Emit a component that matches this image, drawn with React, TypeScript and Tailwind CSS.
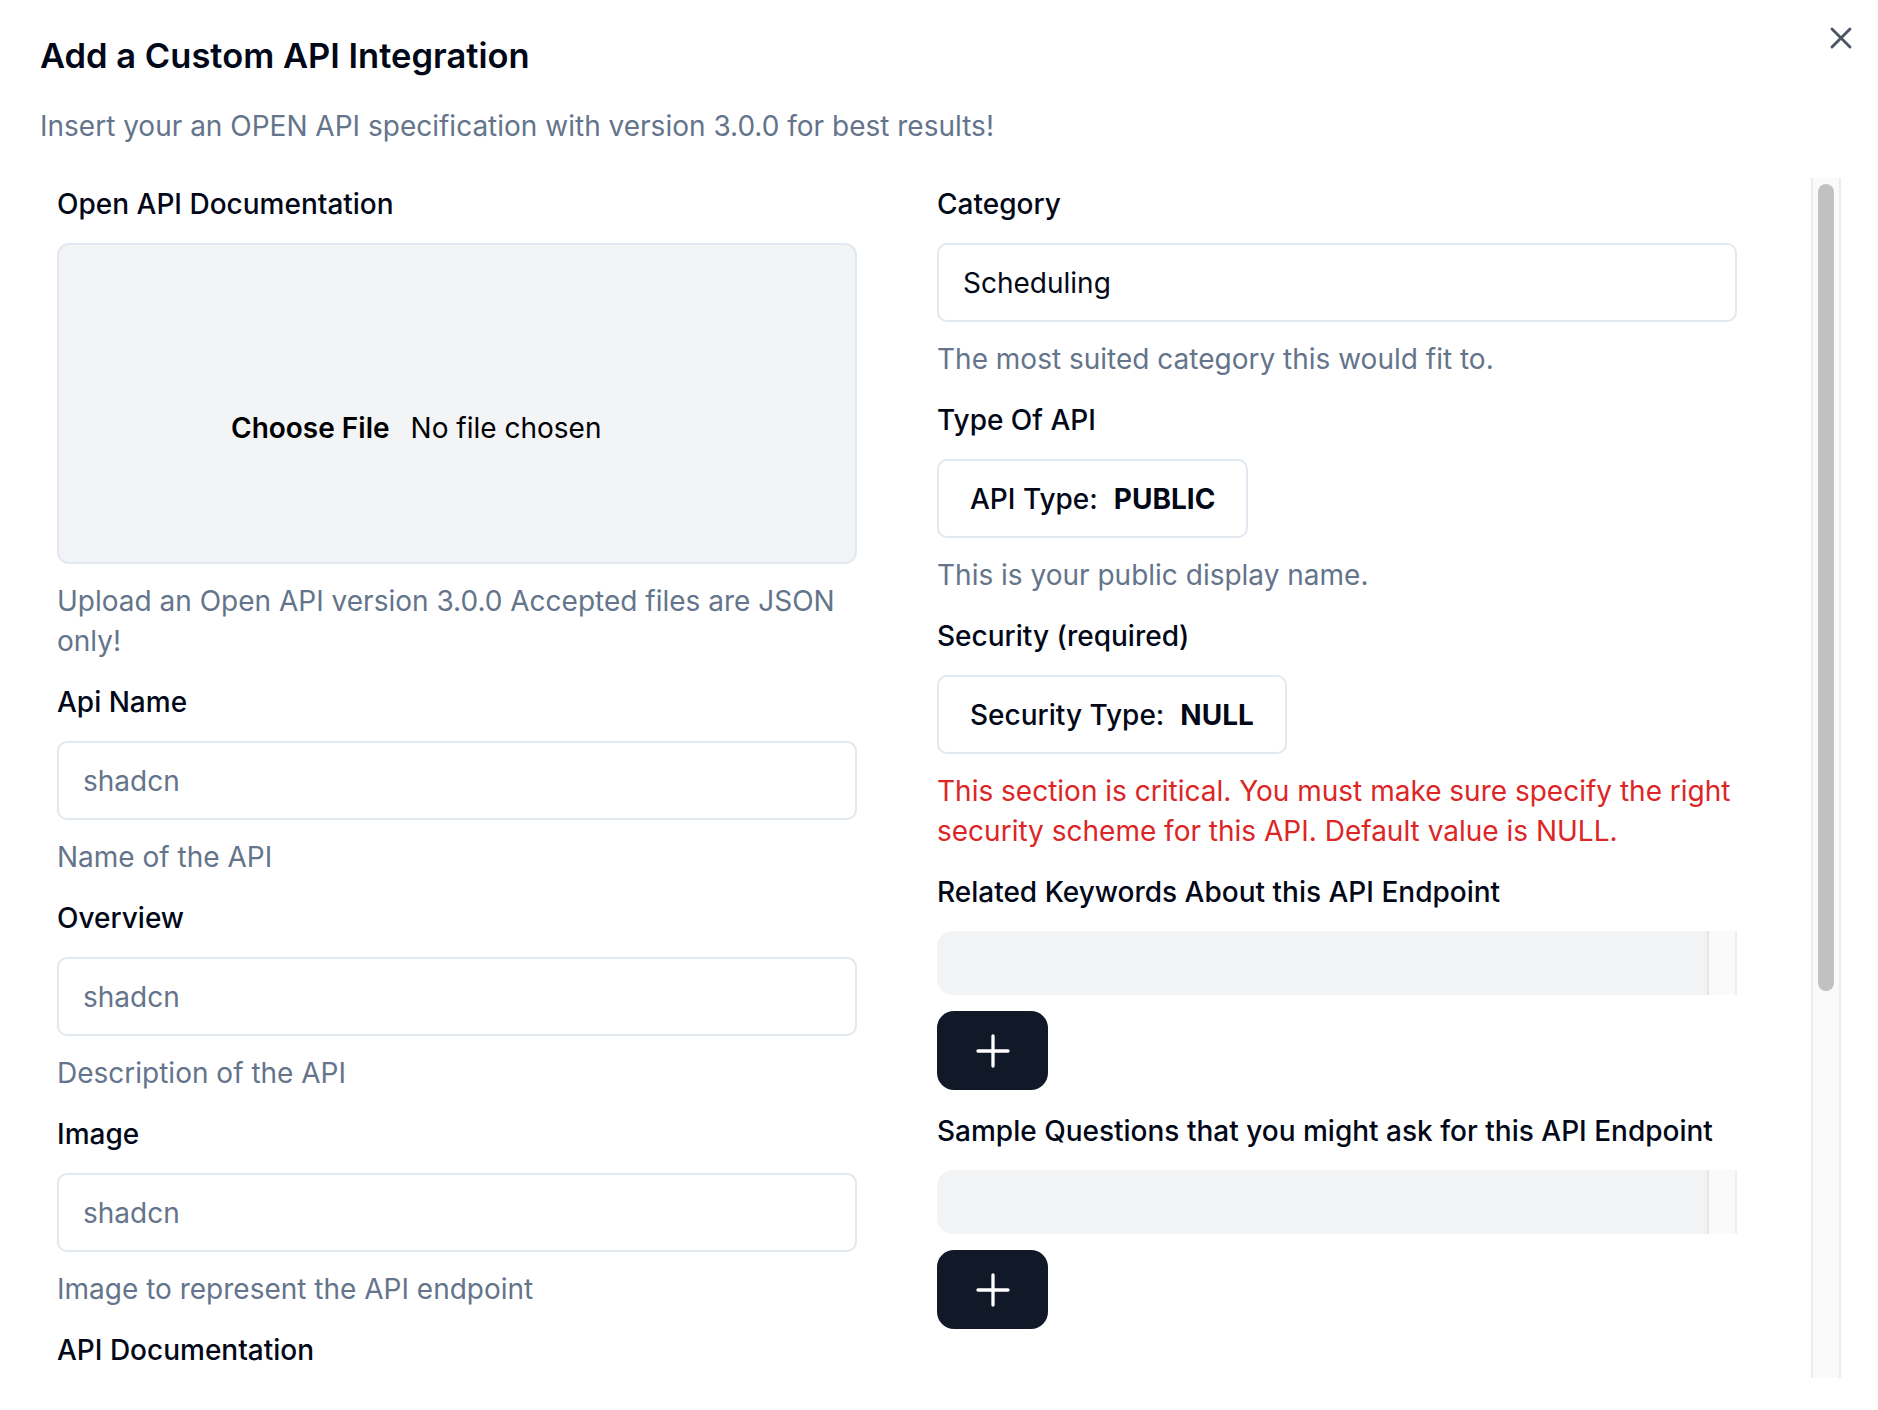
import React from 'react';
import { X } from 'lucide-react';

const Label = ({ children }: { children: React.ReactNode }) => (
  <div className="text-[28px] leading-[40px] font-medium text-[#020817]">{children}</div>
);

const Hint = ({ children, danger }: { children: React.ReactNode; danger?: boolean }) => (
  <p className={`mt-[17px] text-[28px] leading-[40px] ${danger ? 'text-[#dc2626]' : 'text-[#64748b]'}`}>
    {children}
  </p>
);

const TextField = ({ placeholder, value }: { placeholder?: string; value?: string }) => (
  <input
    readOnly
    placeholder={placeholder}
    defaultValue={value}
    className="mt-[19px] h-[79px] w-full rounded-[10px] border-2 border-[#e2e8f0] bg-white px-[24px] text-[28px] text-[#020817] placeholder:text-[#64748b] outline-none"
  />
);

const PickBox = ({ label, value }: { label: string; value: string }) => (
  <div className="mt-[19px] flex h-[79px] w-fit items-center gap-[16px] rounded-[10px] border-2 border-[#e2e8f0] bg-white px-[31px] text-[28px] text-[#020817]">
    <span className="font-medium">{label}</span>
    <span className="font-bold">{value}</span>
  </div>
);

const ListBar = () => (
  <div className="mt-[19px] flex h-[64px] w-full">
    <div className="flex-1 rounded-l-[16px] bg-[#f2f3f5]" />
    <div className="w-[30px] border-x-2 border-l-[#e6e6e6] border-r-[#efefef] bg-[#fafafa]" />
  </div>
);

const AddButton = () => (
  <button className="mt-[16px] flex h-[79px] w-[111px] items-center justify-center rounded-[17px] bg-[#111827]">
    <svg width="34" height="34" viewBox="0 0 34 34" fill="none" stroke="white" strokeWidth="3.3" strokeLinecap="round">
      <path d="M17 2v30M2 17h30" />
    </svg>
  </button>
);

export default function App() {
  return (
    <div className="relative h-[1410px] w-[1878px] overflow-hidden bg-white pl-[40px] font-['Inter','Liberation_Sans',sans-serif]">
      <button className="absolute left-[1823px] top-[20px] text-[#4b5563]">
        <X size={36} strokeWidth={1.9} />
      </button>

      <h2 className="pt-[39px] text-[34.5px] leading-[34px] font-semibold text-[#020817]">
        Add a Custom API Integration
      </h2>
      <p className="mt-[33px] text-[28px] leading-[40px] text-[#64748b]">
        Insert your an OPEN API specification with version 3.0.0 for best results!
      </p>

      <div className="mt-[32px] flex h-[1200px] w-[1801px]">
        <div className="flex-1 overflow-hidden pl-[17px] pt-[6px]">
          <div className="grid grid-cols-[800px_800px] gap-x-[80px]">
            {/* left column */}
            <div className="flex flex-col gap-[21px]">
              <div>
                <Label>Open API Documentation</Label>
                <div className="mt-[19px] flex h-[321px] items-center rounded-[12px] border-2 border-[#e2e8f0] bg-[#f3f4f6] pl-[172px] pt-[48px] text-[28px] text-black">
                  <span className="font-semibold">Choose File</span>
                  <span className="ml-[21px]">No file chosen</span>
                </div>
                <Hint>Upload an Open API version 3.0.0 Accepted files are JSON only!</Hint>
              </div>
              <div>
                <Label>Api Name</Label>
                <TextField placeholder="shadcn" />
                <Hint>Name of the API</Hint>
              </div>
              <div>
                <Label>Overview</Label>
                <TextField placeholder="shadcn" />
                <Hint>Description of the API</Hint>
              </div>
              <div>
                <Label>Image</Label>
                <TextField placeholder="shadcn" />
                <Hint>Image to represent the API endpoint</Hint>
              </div>
              <div>
                <Label>API Documentation</Label>
                <TextField placeholder="shadcn" />
              </div>
            </div>

            {/* right column */}
            <div className="flex flex-col gap-[21px]">
              <div>
                <Label>Category</Label>
                <TextField value="Scheduling" />
                <Hint>The most suited category this would fit to.</Hint>
              </div>
              <div>
                <Label>Type Of API</Label>
                <PickBox label="API Type:" value="PUBLIC" />
                <Hint>This is your public display name.</Hint>
              </div>
              <div>
                <Label>Security (required)</Label>
                <PickBox label="Security Type:" value="NULL" />
                <Hint danger>
                  This section is critical. You must make sure specify the right security scheme for this API. Default value is NULL.
                </Hint>
              </div>
              <div>
                <Label>Related Keywords About this API Endpoint</Label>
                <ListBar />
                <AddButton />
              </div>
              <div>
                <Label>Sample Questions that you might ask for this API Endpoint</Label>
                <ListBar />
                <AddButton />
              </div>
            </div>
          </div>
        </div>

        {/* scrollbar */}
        <div className="w-[30px] border-x-2 border-[#ececec] bg-[#fafafa] px-[5px] pt-[6px]">
          <div className="h-[807px] w-full rounded-full bg-[#c1c1c1]" />
        </div>
      </div>
    </div>
  );
}
